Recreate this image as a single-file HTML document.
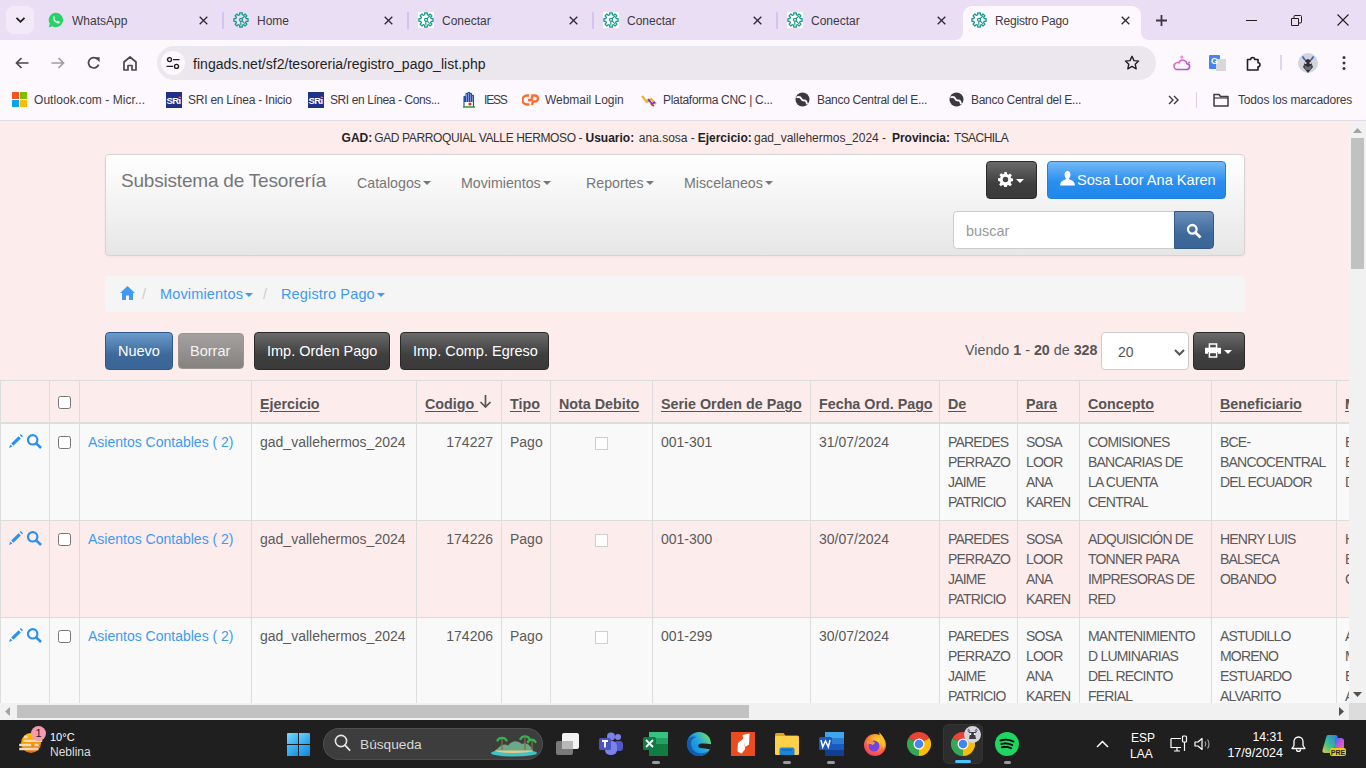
<!DOCTYPE html>
<html><head><meta charset="utf-8">
<style>
*{box-sizing:border-box;margin:0;padding:0}
html,body{width:1366px;height:768px;overflow:hidden;background:#fdecec;font-family:"Liberation Sans",sans-serif}
.abs{position:absolute}
.t{position:absolute;white-space:nowrap;line-height:1;font-size:14px}
#tabs{position:absolute;left:0;top:0;width:1366px;height:40px;background:#e9def4}
.tabt{top:15.2px;font-size:12px;color:#3c3b44}
#toolbar{position:absolute;left:0;top:40px;width:1366px;height:40px;background:#fdf7fe}
#omni{position:absolute;left:157px;top:46px;width:999px;height:34px;border-radius:17px;background:#ece6ef}
#bm{position:absolute;left:0;top:80px;width:1366px;height:41px;background:#fdf7fe;border-bottom:1px solid #e3dbe6}
.bmt{top:93.8px;font-size:12px;color:#3c3b44}
#page{position:absolute;left:0;top:0;width:1349px;height:703px;overflow:hidden}
#pagebg{position:absolute;left:0;top:121px;width:1349px;height:582px;background:#fdecec}
.t12{position:absolute;white-space:nowrap;line-height:1;font-size:12px}
#navbar{position:absolute;left:105px;top:154px;width:1140px;height:102px;border:1px solid #d4d4d4;border-radius:4px;background:linear-gradient(#fff,#e6e6e6);box-shadow:0 1px 3px rgba(0,0,0,.05)}
.nav{top:175.5px;font-size:14.2px;color:#777}
.caret{display:inline-block;width:0;height:0;border-left:4px solid transparent;border-right:4px solid transparent;border-top:4px solid #777;vertical-align:middle;margin-left:2px;margin-top:-1px}
.caret.w{border-top-color:#fff;margin:0}
.caret.b{border-top-color:#3f9af2}
.btn{position:absolute;border-radius:4px}
.dark{background:linear-gradient(#6a6a6a,#3f3f3f 60%,#3a3a3a);border:1px solid #2a2a2a}
#userbtn{background:linear-gradient(#74b9f6,#2a8ef0 55%,#1f88ea);border:1px solid #2080e0}
#search{position:absolute;background:#fff;border:1px solid #ccc;border-radius:4px 0 0 4px}
#searchbtn{background:linear-gradient(#6b8fbb,#3f6b9c 60%,#3a6596);border:1px solid #2f5a8a;border-radius:0 4px 4px 0}
#breadcrumb{position:absolute;left:105px;top:276px;width:1140px;height:36px;background:#f5f5f5;border-radius:4px}
.bc{top:287px;font-size:14.5px;color:#3f9af2;letter-spacing:0.15px}
.blue2{background:linear-gradient(#6a9bcb,#3d6a9b 60%,#3a6596);border:1px solid #2d5a8a}
.gray{background:linear-gradient(#a5a1a0,#85817f);border:1px solid #9a9695}
.btxt{top:11px;color:#fff;font-size:14.5px}
#select{position:absolute;background:#fff;border:1px solid #ccc;border-radius:4px}
.th{font-weight:bold;color:#555;font-size:14.3px;text-decoration:underline;text-underline-offset:1.5px}
.td{color:#5a5a5a;line-height:20px;top:0}
.up{letter-spacing:-0.8px}
.lnk{color:#3f9af2}
.cb{position:absolute;width:13px;height:13px;border:1px solid #767676;border-radius:2.5px;background:#fff}
.cbd{position:absolute;width:13px;height:13px;border:1px solid #cfcfcf;background:#fff}
#vscroll{position:absolute;left:1349px;top:121px;width:17px;height:582px;background:#f1f1f1}
#hscroll{position:absolute;left:0;top:703px;width:1349px;height:17px;background:#f1f1f1}
#corner{position:absolute;left:1349px;top:703px;width:17px;height:17px;background:#dcdcdc}
#taskbar{position:absolute;left:0;top:720px;width:1366px;height:48px;background:#1f1f1f}
.tb{position:absolute;white-space:nowrap;line-height:1;color:#fff;font-size:12px}

</style></head><body>
<div id="tabs">
 <div class="abs" style="left:6px;top:6px;width:28px;height:28px;border-radius:8px;background:#f2eaf8"></div>
 <svg class="abs" style="left:15px;top:16px" width="11" height="8" viewBox="0 0 11 8"><path d="M1.5 1.8l4 4 4-4" fill="none" stroke="#1f1f1f" stroke-width="1.8"/></svg>
 <!-- active tab -->
 <div class="abs" style="left:963px;top:6px;width:178px;height:40px;border-radius:9px 9px 0 0;background:#fdf7fe"></div>
 <div class="abs" style="left:955px;top:32px;width:8px;height:8px;background:#fdf7fe"></div>
 <div class="abs" style="left:947px;top:24px;width:16px;height:16px;border-radius:50%;background:#e9def4"></div>
 <div class="abs" style="left:1141px;top:32px;width:8px;height:8px;background:#fdf7fe"></div>
 <div class="abs" style="left:1141px;top:24px;width:16px;height:16px;border-radius:50%;background:#e9def4"></div>
 <svg class="abs" style="left:48px;top:12px" width="16" height="16" viewBox="0 0 16 16"><path d="M8 .8a7.2 7.2 0 0 0-6.2 10.9L.8 15.2l3.6-.9A7.2 7.2 0 1 0 8 .8z" fill="#25d366"/><path d="M5.3 4.2c.3-.3.6-.3.8 0l.8 1.6c.1.3 0 .5-.2.7l-.4.5c.5 1.1 1.4 2 2.6 2.6l.5-.5c.2-.2.5-.3.7-.1l1.5.8c.3.2.3.5 0 .9-.5.6-1.1 1-1.9.8-2.1-.6-4.1-2.6-4.7-4.7-.2-.8.2-1.5.3-1.6z" fill="#fff"/></svg>
<div class="t tabt" style="left:72px">WhatsApp</div>
<svg class="abs" style="left:198.5px;top:15.5px" width="9" height="9" viewBox="0 0 9 9"><path d="M.7.7l7.6 7.6M8.3.7L.7 8.3" stroke="#2f2d36" stroke-width="1.35"/></svg>
<svg class="abs" style="left:233px;top:12px" width="16" height="16" viewBox="0 0 16 16"><path d="M6.70 2.76 L6.70 0.92 L9.30 0.92 L9.30 2.76 L10.79 3.37 L12.09 2.07 L13.93 3.91 L12.63 5.21 L13.24 6.70 L15.08 6.70 L15.08 9.30 L13.24 9.30 L12.63 10.79 L13.93 12.09 L12.09 13.93 L10.79 12.63 L9.30 13.24 L9.30 15.08 L6.70 15.08 L6.70 13.24 L5.21 12.63 L3.91 13.93 L2.07 12.09 L3.37 10.79 L2.76 9.30 L0.92 9.30 L0.92 6.70 L2.76 6.70 L3.37 5.21 L2.07 3.91 L3.91 2.07 L5.21 3.37Z" fill="none" stroke="#16998a" stroke-width="1.3" stroke-linejoin="round"/><circle cx="8" cy="7.8" r="1.5" fill="none" stroke="#16998a" stroke-width="1.2"/><path d="M9.1 6.7l2.7-2.7M9.1 8.9l2.7 2.7M7.8 9.3v3.7" fill="none" stroke="#16998a" stroke-width="1.1"/></svg>
<div class="t tabt" style="left:257px">Home</div>
<svg class="abs" style="left:383.5px;top:15.5px" width="9" height="9" viewBox="0 0 9 9"><path d="M.7.7l7.6 7.6M8.3.7L.7 8.3" stroke="#2f2d36" stroke-width="1.35"/></svg>
<svg class="abs" style="left:418px;top:12px" width="16" height="16" viewBox="0 0 16 16"><rect x="0" y="0" width="16" height="16" fill="#fff"/><path d="M6.70 2.76 L6.70 0.92 L9.30 0.92 L9.30 2.76 L10.79 3.37 L12.09 2.07 L13.93 3.91 L12.63 5.21 L13.24 6.70 L15.08 6.70 L15.08 9.30 L13.24 9.30 L12.63 10.79 L13.93 12.09 L12.09 13.93 L10.79 12.63 L9.30 13.24 L9.30 15.08 L6.70 15.08 L6.70 13.24 L5.21 12.63 L3.91 13.93 L2.07 12.09 L3.37 10.79 L2.76 9.30 L0.92 9.30 L0.92 6.70 L2.76 6.70 L3.37 5.21 L2.07 3.91 L3.91 2.07 L5.21 3.37Z" fill="none" stroke="#16998a" stroke-width="1.3" stroke-linejoin="round"/><circle cx="8" cy="7.8" r="1.5" fill="none" stroke="#16998a" stroke-width="1.2"/><path d="M9.1 6.7l2.7-2.7M9.1 8.9l2.7 2.7M7.8 9.3v3.7" fill="none" stroke="#16998a" stroke-width="1.1"/></svg>
<div class="t tabt" style="left:442px">Conectar</div>
<svg class="abs" style="left:568.5px;top:15.5px" width="9" height="9" viewBox="0 0 9 9"><path d="M.7.7l7.6 7.6M8.3.7L.7 8.3" stroke="#2f2d36" stroke-width="1.35"/></svg>
<svg class="abs" style="left:603px;top:12px" width="16" height="16" viewBox="0 0 16 16"><rect x="0" y="0" width="16" height="16" fill="#fff"/><path d="M6.70 2.76 L6.70 0.92 L9.30 0.92 L9.30 2.76 L10.79 3.37 L12.09 2.07 L13.93 3.91 L12.63 5.21 L13.24 6.70 L15.08 6.70 L15.08 9.30 L13.24 9.30 L12.63 10.79 L13.93 12.09 L12.09 13.93 L10.79 12.63 L9.30 13.24 L9.30 15.08 L6.70 15.08 L6.70 13.24 L5.21 12.63 L3.91 13.93 L2.07 12.09 L3.37 10.79 L2.76 9.30 L0.92 9.30 L0.92 6.70 L2.76 6.70 L3.37 5.21 L2.07 3.91 L3.91 2.07 L5.21 3.37Z" fill="none" stroke="#16998a" stroke-width="1.3" stroke-linejoin="round"/><circle cx="8" cy="7.8" r="1.5" fill="none" stroke="#16998a" stroke-width="1.2"/><path d="M9.1 6.7l2.7-2.7M9.1 8.9l2.7 2.7M7.8 9.3v3.7" fill="none" stroke="#16998a" stroke-width="1.1"/></svg>
<div class="t tabt" style="left:627px">Conectar</div>
<svg class="abs" style="left:752.5px;top:15.5px" width="9" height="9" viewBox="0 0 9 9"><path d="M.7.7l7.6 7.6M8.3.7L.7 8.3" stroke="#2f2d36" stroke-width="1.35"/></svg>
<svg class="abs" style="left:787px;top:12px" width="16" height="16" viewBox="0 0 16 16"><rect x="0" y="0" width="16" height="16" fill="#fff"/><path d="M6.70 2.76 L6.70 0.92 L9.30 0.92 L9.30 2.76 L10.79 3.37 L12.09 2.07 L13.93 3.91 L12.63 5.21 L13.24 6.70 L15.08 6.70 L15.08 9.30 L13.24 9.30 L12.63 10.79 L13.93 12.09 L12.09 13.93 L10.79 12.63 L9.30 13.24 L9.30 15.08 L6.70 15.08 L6.70 13.24 L5.21 12.63 L3.91 13.93 L2.07 12.09 L3.37 10.79 L2.76 9.30 L0.92 9.30 L0.92 6.70 L2.76 6.70 L3.37 5.21 L2.07 3.91 L3.91 2.07 L5.21 3.37Z" fill="none" stroke="#16998a" stroke-width="1.3" stroke-linejoin="round"/><circle cx="8" cy="7.8" r="1.5" fill="none" stroke="#16998a" stroke-width="1.2"/><path d="M9.1 6.7l2.7-2.7M9.1 8.9l2.7 2.7M7.8 9.3v3.7" fill="none" stroke="#16998a" stroke-width="1.1"/></svg>
<div class="t tabt" style="left:811px">Conectar</div>
<svg class="abs" style="left:936.5px;top:15.5px" width="9" height="9" viewBox="0 0 9 9"><path d="M.7.7l7.6 7.6M8.3.7L.7 8.3" stroke="#2f2d36" stroke-width="1.35"/></svg>
<svg class="abs" style="left:971px;top:12px" width="16" height="16" viewBox="0 0 16 16"><path d="M6.70 2.76 L6.70 0.92 L9.30 0.92 L9.30 2.76 L10.79 3.37 L12.09 2.07 L13.93 3.91 L12.63 5.21 L13.24 6.70 L15.08 6.70 L15.08 9.30 L13.24 9.30 L12.63 10.79 L13.93 12.09 L12.09 13.93 L10.79 12.63 L9.30 13.24 L9.30 15.08 L6.70 15.08 L6.70 13.24 L5.21 12.63 L3.91 13.93 L2.07 12.09 L3.37 10.79 L2.76 9.30 L0.92 9.30 L0.92 6.70 L2.76 6.70 L3.37 5.21 L2.07 3.91 L3.91 2.07 L5.21 3.37Z" fill="none" stroke="#16998a" stroke-width="1.3" stroke-linejoin="round"/><circle cx="8" cy="7.8" r="1.5" fill="none" stroke="#16998a" stroke-width="1.2"/><path d="M9.1 6.7l2.7-2.7M9.1 8.9l2.7 2.7M7.8 9.3v3.7" fill="none" stroke="#16998a" stroke-width="1.1"/></svg>
<div class="t tabt" style="left:995px;letter-spacing:-0.2px">Registro Pago</div>
<svg class="abs" style="left:1120.5px;top:15.5px" width="9" height="9" viewBox="0 0 9 9"><path d="M.7.7l7.6 7.6M8.3.7L.7 8.3" stroke="#2f2d36" stroke-width="1.35"/></svg>
<div class="abs" style="left:222px;top:12px;width:2px;height:17px;background:#d4c3f2"></div>
<div class="abs" style="left:407px;top:12px;width:2px;height:17px;background:#d4c3f2"></div>
<div class="abs" style="left:592px;top:12px;width:2px;height:17px;background:#d4c3f2"></div>
<div class="abs" style="left:776px;top:12px;width:2px;height:17px;background:#d4c3f2"></div>
 <svg class="abs" style="left:1155.5px;top:15px" width="11" height="11" viewBox="0 0 11 11"><path d="M5.5 0v11M0 5.5h11" stroke="#3a3842" stroke-width="1.8"/></svg>
 <div class="abs" style="left:1246px;top:20px;width:11px;height:1px;background:#1f1f1f"></div>
 <svg class="abs" style="left:1291px;top:15px" width="11" height="11" viewBox="0 0 11 11"><path d="M.5 3.5h7v7h-7z M3 3.5V1.5a1 1 0 0 1 1-1h5.5a1 1 0 0 1 1 1V7a1 1 0 0 1-1 1H7.5" fill="none" stroke="#1f1f1f" stroke-width="1"/></svg>
 <svg class="abs" style="left:1337px;top:14px" width="12" height="12" viewBox="0 0 12 12"><path d="M.5.5l11 11M11.5.5l-11 11" stroke="#1f1f1f" stroke-width="1.1"/></svg>
</div>
<div id="toolbar">
 <svg class="abs" style="left:15px;top:17px" width="14" height="12" viewBox="0 0 14 12"><path d="M13.5 6H1.5M6.5 1L1.5 6l5 5" fill="none" stroke="#47464f" stroke-width="1.7"/></svg>
 <svg class="abs" style="left:51px;top:17px" width="14" height="12" viewBox="0 0 14 12"><path d="M.5 6h12M7.5 1l5 5-5 5" fill="none" stroke="#a29ca6" stroke-width="1.7"/></svg>
 <svg class="abs" style="left:87px;top:16px" width="14" height="14" viewBox="0 0 14 14"><path d="M11.6 8.6A5.2 5.2 0 1 1 10.3 3" fill="none" stroke="#47464f" stroke-width="1.7"/><path d="M7.6 1.2h5v5z" fill="#47464f"/></svg>
 <svg class="abs" style="left:123px;top:16px" width="14" height="15" viewBox="0 0 14 15"><path d="M1 14V6l6-5 6 5v8H9V9.5H5V14z" fill="none" stroke="#47464f" stroke-width="1.7" stroke-linejoin="round"/></svg>
</div>
<div id="omni">
 <div class="abs" style="left:4px;top:5px;width:24px;height:24px;border-radius:50%;background:#fdf7fe"></div>
 <svg class="abs" style="left:9px;top:10px" width="14" height="14" viewBox="0 0 14 14"><circle cx="3.5" cy="3.6" r="2" fill="none" stroke="#1f1f1f" stroke-width="1.4"/><path d="M7 3.6h6.5M0.5 10.4H7" stroke="#1f1f1f" stroke-width="1.4"/><circle cx="10.5" cy="10.4" r="2" fill="none" stroke="#1f1f1f" stroke-width="1.4"/></svg>
 <div class="t" style="left:36px;top:11px;font-size:14px;color:#1f1f1f;letter-spacing:0.03px">fingads.net/sf2/tesoreria/registro_pago_list.php</div>
 <svg class="abs" style="left:967px;top:9px" width="16" height="16" viewBox="0 0 16 16"><path d="M8 1.3l2 4.3 4.6.5-3.4 3.1 1 4.6L8 11.4l-4.2 2.4 1-4.6L1.4 6.1 6 5.6z" fill="none" stroke="#1f1f1f" stroke-width="1.4" stroke-linejoin="round"/></svg>
</div>
<svg class="abs" style="left:1172px;top:55px" width="19" height="16" viewBox="0 0 19 16"><defs><linearGradient id="wx" x1="0" y1="0" x2="1" y2="1"><stop offset="0" stop-color="#f06ac8"/><stop offset="1" stop-color="#a050e0"/></linearGradient></defs><path d="M4.5 14.5h10a2.9 2.9 0 0 0 .4-5.8 4.2 4.2 0 0 0-8-1A3.4 3.4 0 0 0 4.5 14.5z" fill="none" stroke="url(#wx)" stroke-width="1.6"/><circle cx="9.8" cy="2.2" r="1.1" fill="none" stroke="#e070c0" stroke-width="1"/><circle cx="2.3" cy="9.5" r="1" fill="#e070c0"/><circle cx="17" cy="7.6" r="1" fill="#c060d0"/></svg>
<div class="abs" style="left:1209px;top:55px;width:11px;height:14px;background:#4285f4;border-radius:1px"></div>
<div class="abs" style="left:1216px;top:59px;width:10px;height:12px;background:#d8d8d8"></div>
<div class="abs" style="left:1211px;top:56px;font:bold 9px 'Liberation Sans';color:#fff">G</div>
<svg class="abs" style="left:1246px;top:55px" width="17" height="16" viewBox="0 0 17 16"><path d="M1.5 4.5h3.2a2 2 0 1 1 4 0h3.3v3.3a2 2 0 1 1 0 4v3.2H1.5z" fill="none" stroke="#1f1f1f" stroke-width="1.6" stroke-linejoin="round"/></svg>
<div class="abs" style="left:1280px;top:55px;width:2px;height:15px;background:#e0d4f4"></div>
<svg class="abs" style="left:1298px;top:53px" width="20" height="20" viewBox="0 0 20 20"><circle cx="10" cy="10" r="10" fill="#d4d4dc"/><path d="M3.5 3.5l4 4.5L5 14l5 6 5-6-2.5-6 4-4.5-4.5 3.5L10 6 7.5 7z" fill="#2e2e36"/><path d="M6 12l4 2 4-2-1.5 5h-5z" fill="#6a6a72"/><circle cx="7.6" cy="10" r="1" fill="#ddd"/><circle cx="12.4" cy="10" r="1" fill="#ddd"/><path d="M4.5 3.5l2.5 3.5M15.5 3.5L13 7" stroke="#2a6ac0" stroke-width="1.6"/></svg>
<svg class="abs" style="left:1342px;top:55px" width="4" height="16" viewBox="0 0 4 16"><circle cx="2" cy="2.5" r="1.5" fill="#3a3842"/><circle cx="2" cy="8" r="1.5" fill="#3a3842"/><circle cx="2" cy="13.5" r="1.5" fill="#3a3842"/></svg>
<div id="bm"></div>
<div class="abs" style="left:12px;top:92px;width:7px;height:7px;background:#f35325"></div><div class="abs" style="left:20px;top:92px;width:7px;height:7px;background:#81bc06"></div><div class="abs" style="left:12px;top:100px;width:7px;height:7px;background:#05a6f0"></div><div class="abs" style="left:20px;top:100px;width:7px;height:7px;background:#ffba08"></div>
<div class="t bmt" style="left:34px;letter-spacing:0.05px">Outlook.com - Micr...</div>
<svg class="abs" style="left:166px;top:92px" width="16" height="16" viewBox="0 0 16 16"><rect width="16" height="16" fill="#1f3288"/><text x="0.6" y="12" font-family="Liberation Sans" font-weight="bold" font-size="9.5" letter-spacing="-0.6" fill="#fff">SRi</text><rect x="12.6" y="4" width="1.6" height="1.6" fill="#e02030"/></svg>
<div class="t bmt" style="left:188px;letter-spacing:-0.24px">SRI en Línea - Inicio</div>
<svg class="abs" style="left:308px;top:92px" width="16" height="16" viewBox="0 0 16 16"><rect width="16" height="16" fill="#1f3288"/><text x="0.6" y="12" font-family="Liberation Sans" font-weight="bold" font-size="9.5" letter-spacing="-0.6" fill="#fff">SRi</text><rect x="12.6" y="4" width="1.6" height="1.6" fill="#e02030"/></svg>
<div class="t bmt" style="left:330px;letter-spacing:-0.41px">SRI en Línea - Cons...</div>
<svg class="abs" style="left:462px;top:92px" width="14" height="16" viewBox="0 0 14 16"><path d="M2 15V5c0-1 1-1 1 0v5M4 10V2c0-1 1.5-1 1.5 0v8M6 10V1c0-1 1.5-1 1.5 0v9M8 10V2c0-1 1.5-1 1.5 0v8M10 10V4c0-1 1.5-1 1.5 0v11" fill="none" stroke="#1e4fa8" stroke-width="1.1"/><path d="M1 15h12" stroke="#2a9a3a" stroke-width="1.5"/><circle cx="8" cy="12" r="1.6" fill="#e0302a"/></svg>
<div class="t bmt" style="left:484px;letter-spacing:-1.2px">IESS</div>
<svg class="abs" style="left:522px;top:94px" width="17" height="12" viewBox="0 0 17 12"><path d="M7 1.5H5a4.5 4.5 0 0 0 0 9h2.5M6 6h3.5l1-4.5h2.5a3 3 0 0 1 0 6h-2L10 11" fill="none" stroke="#ff6c2c" stroke-width="2.4"/></svg>
<div class="t bmt" style="left:545px;letter-spacing:-0.03px">Webmail Login</div>
<svg class="abs" style="left:641px;top:93px" width="16" height="14" viewBox="0 0 16 14"><path d="M1 3l5 6 4-3 5 5" fill="none" stroke="#e8b42a" stroke-width="2.2"/><path d="M7 6l4 5 3-2" fill="none" stroke="#7a3fb5" stroke-width="2"/><path d="M10 11l3 2" stroke="#d9352a" stroke-width="2"/></svg>
<div class="t bmt" style="left:663px;letter-spacing:-0.30px">Plataforma CNC | C...</div>
<svg class="abs" style="left:795px;top:92px" width="15" height="15" viewBox="0 0 15 15"><circle cx="7.5" cy="7.5" r="7" fill="#3a3940"/><path d="M2.2 5.2C4 4.6 5.6 5.2 6.2 6.6 6.8 8 7.4 8.6 9 8.4 10.6 8.2 11.6 9.4 11.9 11.6" fill="none" stroke="#fdf7fe" stroke-width="1.9" stroke-linecap="round"/></svg>
<div class="t bmt" style="left:817px;letter-spacing:-0.30px">Banco Central del E...</div>
<svg class="abs" style="left:949px;top:92px" width="15" height="15" viewBox="0 0 15 15"><circle cx="7.5" cy="7.5" r="7" fill="#3a3940"/><path d="M2.2 5.2C4 4.6 5.6 5.2 6.2 6.6 6.8 8 7.4 8.6 9 8.4 10.6 8.2 11.6 9.4 11.9 11.6" fill="none" stroke="#fdf7fe" stroke-width="1.9" stroke-linecap="round"/></svg>
<div class="t bmt" style="left:971px;letter-spacing:-0.30px">Banco Central del E...</div>
<svg class="abs" style="left:1168px;top:95px" width="11" height="10" viewBox="0 0 11 10"><path d="M1 1l4 4-4 4M6 1l4 4-4 4" fill="none" stroke="#3c3b44" stroke-width="1.4"/></svg>
<div class="abs" style="left:1196px;top:92px;width:1px;height:16px;background:#ddcdf5"></div>
<svg class="abs" style="left:1213px;top:93px" width="16" height="14" viewBox="0 0 16 14"><path d="M1 1.5h5l1.5 2H15v9.5H1z" fill="none" stroke="#3c3b44" stroke-width="1.5" stroke-linejoin="round"/><path d="M1 5h14" stroke="#3c3b44" stroke-width="1.2"/></svg>
<div class="t bmt" style="left:1238px;letter-spacing:-0.16px">Todos los marcadores</div>

<div id="page">
<div class="t12" style="left:341.6px;top:132px;color:#333;"><b style="color:#222">GAD:</b></div><div class="t12" style="left:374.2px;top:132px;color:#333;letter-spacing:-0.37px">GAD PARROQUIAL VALLE HERMOSO -</div><div class="t12" style="left:585.5px;top:132px;color:#333;"><b style="color:#222">Usuario:</b></div><div class="t12" style="left:638.8px;top:132px;color:#333;">ana.sosa -</div><div class="t12" style="left:697.7px;top:132px;color:#333;"><b style="color:#222">Ejercicio:</b></div><div class="t12" style="left:754px;top:132px;color:#333;">gad_vallehermos_2024 -</div><div class="t12" style="left:891.9px;top:132px;color:#333;"><b style="color:#222">Provincia:</b></div><div class="t12" style="left:953.9px;top:132px;color:#333;letter-spacing:-0.55px">TSACHILA</div>
<div id="navbar"></div>
<div class="t" style="left:121px;top:171px;font-size:19px;letter-spacing:-0.2px;color:#777">Subsistema de Tesorería</div>
<div class="t nav" style="left:357px">Catalogos<i class="caret"></i></div>
<div class="t nav" style="left:461px">Movimientos<i class="caret"></i></div>
<div class="t nav" style="left:586px">Reportes<i class="caret"></i></div>
<div class="t nav" style="left:684px">Miscelaneos<i class="caret"></i></div>
<div id="gearbtn" class="btn dark" style="left:986px;top:161px;width:51px;height:38px">
 <svg width="15" height="15" viewBox="0 0 16 16" style="position:absolute;left:11px;top:9.5px"><path fill="#fff" fill-rule="evenodd" d="M6.7 0h2.6l.4 2.2 1.4.6 1.8-1.3 1.9 1.9-1.3 1.8.6 1.4 2.2.4v2.6l-2.2.4-.6 1.4 1.3 1.8-1.9 1.9-1.8-1.3-1.4.6-.4 2.2H6.7l-.4-2.2-1.4-.6-1.8 1.3-1.9-1.9 1.3-1.8-.6-1.4L0 9.3V6.7l2.2-.4.6-1.4-1.3-1.8 1.9-1.9 1.8 1.3 1.4-.6zM8 5.1a2.9 2.9 0 1 0 0 5.8 2.9 2.9 0 1 0 0-5.8z"/></svg>
 <i class="caret w" style="position:absolute;left:29px;top:17px"></i>
</div>
<div id="userbtn" class="btn" style="left:1047px;top:161px;width:179px;height:38px">
 <svg width="15" height="15" viewBox="0 0 15 15" style="position:absolute;left:12px;top:9px"><path fill="#fff" d="M7.5 0C5.6 0 4.6 1.6 4.6 3.5c0 1.7.7 3.4 1.6 4.1-.2.8-.9 1-2 1.4C2.4 9.6 1 10.4.5 12.3L0 14.6h15l-.5-2.3c-.5-1.9-1.9-2.7-3.7-3.3-1.1-.4-1.8-.6-2-1.4.9-.7 1.6-2.4 1.6-4.1C10.4 1.6 9.4 0 7.5 0z"/></svg>
 <div class="t" style="left:29px;top:10.5px;color:#fff;font-size:14.6px">Sosa Loor Ana Karen</div>
</div>
<div id="search" style="left:953px;top:211px;width:222px;height:38px"><div class="t" style="left:12px;top:12px;color:#999;font-size:14.4px">buscar</div></div>
<div id="searchbtn" class="btn" style="left:1174px;top:211px;width:40px;height:38px">
 <svg width="16" height="16" viewBox="0 0 16 16" style="position:absolute;left:11px;top:11px"><circle cx="6.3" cy="6.3" r="4.3" fill="none" stroke="#fff" stroke-width="2.3"/><path d="M9.6 9.8l3.9 3.7" stroke="#fff" stroke-width="2.8" stroke-linecap="square"/></svg>
</div>
<div id="breadcrumb"></div>
<svg width="15" height="14" viewBox="0 0 15 14" style="position:absolute;left:120px;top:286px"><path fill="#3f9af2" d="M7.5 0L0 7h2v7h4V9.5h3V14h4V7h2z"/></svg>
<div class="t bc" style="left:142px;color:#ccc">/</div>
<div class="t bc" style="left:160px">Movimientos<i class="caret b"></i></div>
<div class="t bc" style="left:263px;color:#ccc">/</div>
<div class="t bc" style="left:281px">Registro Pago<i class="caret b"></i></div>

<div class="btn blue2" style="left:105px;top:332px;width:68px;height:38px"><div class="t btxt" style="left:12px">Nuevo</div></div>
<div class="btn gray" style="left:178px;top:333px;width:66px;height:36px"><div class="t btxt" style="left:11px;top:10px;color:#f4f4f4">Borrar</div></div>
<div class="btn dark" style="left:254px;top:332px;width:136px;height:38px"><div class="t btxt" style="left:12px">Imp. Orden Pago</div></div>
<div class="btn dark" style="left:400px;top:332px;width:149px;height:38px"><div class="t btxt" style="left:12px">Imp. Comp. Egreso</div></div>

<div class="t" style="left:965px;top:343px;color:#555;font-size:14.3px">Viendo <b>1</b> - <b>20</b> de <b>328</b></div>
<div id="select" style="left:1101px;top:332px;width:88px;height:38px"><div class="t" style="left:16px;top:12px;color:#555">20</div>
<svg width="11" height="7" viewBox="0 0 11 7" style="position:absolute;left:72px;top:15.5px"><path d="M1 1l4.5 4.5L10 1" fill="none" stroke="#555" stroke-width="2"/></svg></div>
<div class="btn dark" style="left:1193px;top:332px;width:52px;height:38px">
 <svg width="16" height="15" viewBox="0 0 17 16" preserveAspectRatio="none" style="position:absolute;left:10.5px;top:9.5px"><path d="M4.7 1h7.6v4.5H4.7z" fill="none" stroke="#fff" stroke-width="1.6"/><path d="M0 5h17v6.5h-3.3V9.5H3.3v2H0z" fill="#fff"/><path d="M4.7 10h7.6v4.8H4.7z" fill="none" stroke="#fff" stroke-width="1.6"/><path d="M5.5 12.5h6" stroke="#444" stroke-width="1"/></svg>
 <i class="caret w" style="position:absolute;left:30px;top:17px"></i>
</div>
<div class="abs" style="left:0;top:381px;width:1349px;height:41px;background:#fdecec"></div>
<div class="abs" style="left:0;top:424px;width:1349px;height:96px;background:#f9f9f9"></div>
<div class="abs" style="left:0;top:521px;width:1349px;height:96px;background:#fdecec"></div>
<div class="abs" style="left:0;top:618px;width:1349px;height:96px;background:#f9f9f9"></div>
<div class="abs" style="left:0;top:380px;width:1349px;height:1px;background:#ddd"></div>
<div class="abs" style="left:0;top:422px;width:1349px;height:2px;background:#ddd"></div>
<div class="abs" style="left:0;top:520px;width:1349px;height:1px;background:#ddd"></div>
<div class="abs" style="left:0;top:617px;width:1349px;height:1px;background:#ddd"></div>
<div class="abs" style="left:0px;top:380px;width:1px;height:330px;background:#ddd"></div>
<div class="abs" style="left:49px;top:380px;width:1px;height:330px;background:#ddd"></div>
<div class="abs" style="left:79px;top:380px;width:1px;height:330px;background:#ddd"></div>
<div class="abs" style="left:251px;top:380px;width:1px;height:330px;background:#ddd"></div>
<div class="abs" style="left:416px;top:380px;width:1px;height:330px;background:#ddd"></div>
<div class="abs" style="left:501px;top:380px;width:1px;height:330px;background:#ddd"></div>
<div class="abs" style="left:550px;top:380px;width:1px;height:330px;background:#ddd"></div>
<div class="abs" style="left:652px;top:380px;width:1px;height:330px;background:#ddd"></div>
<div class="abs" style="left:810px;top:380px;width:1px;height:330px;background:#ddd"></div>
<div class="abs" style="left:939px;top:380px;width:1px;height:330px;background:#ddd"></div>
<div class="abs" style="left:1017px;top:380px;width:1px;height:330px;background:#ddd"></div>
<div class="abs" style="left:1079px;top:380px;width:1px;height:330px;background:#ddd"></div>
<div class="abs" style="left:1211px;top:380px;width:1px;height:330px;background:#ddd"></div>
<div class="abs" style="left:1336px;top:380px;width:1px;height:330px;background:#ddd"></div>
<div class="t th" style="left:260px;top:397px">Ejercicio</div>
<div class="t th" style="left:425px;top:397px">Codigo&nbsp;</div>
<div class="t th" style="left:510px;top:397px">Tipo</div>
<div class="t th" style="left:559px;top:397px">Nota Debito</div>
<div class="t th" style="left:661px;top:397px">Serie Orden de Pago</div>
<div class="t th" style="left:819px;top:397px">Fecha Ord. Pago</div>
<div class="t th" style="left:948px;top:397px">De</div>
<div class="t th" style="left:1026px;top:397px">Para</div>
<div class="t th" style="left:1088px;top:397px">Concepto</div>
<div class="t th" style="left:1220px;top:397px">Beneficiario</div>
<div class="t th" style="left:1345px;top:397px">M</div>
<svg width="13" height="15" viewBox="0 0 13 15" style="position:absolute;left:479px;top:394px"><path d="M6.5 1v12M1.5 8l5 5 5-5" fill="none" stroke="#555" stroke-width="1.7"/></svg>
<div class="cb" style="left:58px;top:396px"></div>
<svg width="16" height="15" viewBox="0 0 16 15" style="position:absolute;left:8px;top:434px"><path fill="#2d8ff0" d="M3.2 9.6L10.6 2.2 12.8 4.4 5.4 11.8zM2.4 10.6L4.4 12.6 1 14zM11.7 1.1L12.7 .1 15 2.3 14 3.3z"/></svg>
<svg width="15" height="15" viewBox="0 0 15 15" style="position:absolute;left:27px;top:434px"><circle cx="5.7" cy="5.8" r="4.7" fill="none" stroke="#2d8ff0" stroke-width="2.2"/><path d="M9.3 9.5l3.8 3.6" stroke="#2d8ff0" stroke-width="2.6" stroke-linecap="square"/></svg>
<div class="cb" style="left:58px;top:436px"></div>
<div class="t td lnk" style="left:88px;top:432px">Asientos Contables ( 2)</div>
<div class="t td" style="left:260px;top:432px">gad_vallehermos_2024</div>
<div class="t td" style="left:446px;top:432px;width:47px;text-align:right">174227</div>
<div class="t td" style="left:510px;top:432px">Pago</div>
<div class="cbd" style="left:595px;top:437px"></div>
<div class="t td" style="left:661px;top:432px">001-301</div>
<div class="t td" style="left:819px;top:432px">31/07/2024</div>
<div class="t td up" style="left:948px;top:432px">PAREDES<br>PERRAZO<br>JAIME<br>PATRICIO</div>
<div class="t td up" style="left:1026px;top:432px">SOSA<br>LOOR<br>ANA<br>KAREN</div>
<div class="t td up" style="left:1088px;top:432px">COMISIONES<br>BANCARIAS DE<br>LA CUENTA<br>CENTRAL</div>
<div class="t td up" style="left:1220px;top:432px">BCE-<br>BANCOCENTRAL<br>DEL ECUADOR</div>
<div class="t td up" style="left:1345px;top:432px">E<br>B<br>D</div>
<svg width="16" height="15" viewBox="0 0 16 15" style="position:absolute;left:8px;top:531px"><path fill="#2d8ff0" d="M3.2 9.6L10.6 2.2 12.8 4.4 5.4 11.8zM2.4 10.6L4.4 12.6 1 14zM11.7 1.1L12.7 .1 15 2.3 14 3.3z"/></svg>
<svg width="15" height="15" viewBox="0 0 15 15" style="position:absolute;left:27px;top:531px"><circle cx="5.7" cy="5.8" r="4.7" fill="none" stroke="#2d8ff0" stroke-width="2.2"/><path d="M9.3 9.5l3.8 3.6" stroke="#2d8ff0" stroke-width="2.6" stroke-linecap="square"/></svg>
<div class="cb" style="left:58px;top:533px"></div>
<div class="t td lnk" style="left:88px;top:529px">Asientos Contables ( 2)</div>
<div class="t td" style="left:260px;top:529px">gad_vallehermos_2024</div>
<div class="t td" style="left:446px;top:529px;width:47px;text-align:right">174226</div>
<div class="t td" style="left:510px;top:529px">Pago</div>
<div class="cbd" style="left:595px;top:534px"></div>
<div class="t td" style="left:661px;top:529px">001-300</div>
<div class="t td" style="left:819px;top:529px">30/07/2024</div>
<div class="t td up" style="left:948px;top:529px">PAREDES<br>PERRAZO<br>JAIME<br>PATRICIO</div>
<div class="t td up" style="left:1026px;top:529px">SOSA<br>LOOR<br>ANA<br>KAREN</div>
<div class="t td up" style="left:1088px;top:529px">ADQUISICIÓN DE<br>TONNER PARA<br>IMPRESORAS DE<br>RED</div>
<div class="t td up" style="left:1220px;top:529px">HENRY LUIS<br>BALSECA<br>OBANDO</div>
<div class="t td up" style="left:1345px;top:529px">H<br>B<br>C</div>
<svg width="16" height="15" viewBox="0 0 16 15" style="position:absolute;left:8px;top:628px"><path fill="#2d8ff0" d="M3.2 9.6L10.6 2.2 12.8 4.4 5.4 11.8zM2.4 10.6L4.4 12.6 1 14zM11.7 1.1L12.7 .1 15 2.3 14 3.3z"/></svg>
<svg width="15" height="15" viewBox="0 0 15 15" style="position:absolute;left:27px;top:628px"><circle cx="5.7" cy="5.8" r="4.7" fill="none" stroke="#2d8ff0" stroke-width="2.2"/><path d="M9.3 9.5l3.8 3.6" stroke="#2d8ff0" stroke-width="2.6" stroke-linecap="square"/></svg>
<div class="cb" style="left:58px;top:630px"></div>
<div class="t td lnk" style="left:88px;top:626px">Asientos Contables ( 2)</div>
<div class="t td" style="left:260px;top:626px">gad_vallehermos_2024</div>
<div class="t td" style="left:446px;top:626px;width:47px;text-align:right">174206</div>
<div class="t td" style="left:510px;top:626px">Pago</div>
<div class="cbd" style="left:595px;top:631px"></div>
<div class="t td" style="left:661px;top:626px">001-299</div>
<div class="t td" style="left:819px;top:626px">30/07/2024</div>
<div class="t td up" style="left:948px;top:626px">PAREDES<br>PERRAZO<br>JAIME<br>PATRICIO</div>
<div class="t td up" style="left:1026px;top:626px">SOSA<br>LOOR<br>ANA<br>KAREN</div>
<div class="t td up" style="left:1088px;top:626px">MANTENIMIENTO<br>D LUMINARIAS<br>DEL RECINTO<br>FERIAL</div>
<div class="t td up" style="left:1220px;top:626px">ASTUDILLO<br>MORENO<br>ESTUARDO<br>ALVARITO</div>
<div class="t td up" style="left:1345px;top:626px">A<br>M<br>E<br>A</div>
</div>
<div id="vscroll"><svg class="abs" style="left:4px;top:6.5px" width="9" height="5" viewBox="0 0 9 5"><path d="M0 5L4.5 0 9 5z" fill="#a3a3a3"/></svg><div class="abs" style="left:2px;top:17px;width:13px;height:131px;background:#c1c1c1"></div><svg class="abs" style="left:4px;top:571px" width="9" height="5" viewBox="0 0 9 5"><path d="M0 0L4.5 5 9 0z" fill="#505050"/></svg></div>
<div id="hscroll"><svg class="abs" style="left:5px;top:4px" width="5" height="9" viewBox="0 0 5 9"><path d="M5 0L0 4.5 5 9z" fill="#a3a3a3"/></svg><div class="abs" style="left:17px;top:2px;width:732px;height:13px;background:#c1c1c1"></div><svg class="abs" style="left:1339px;top:4px" width="5" height="9" viewBox="0 0 5 9"><path d="M0 0L5 4.5 0 9z" fill="#505050"/></svg></div>
<div id="corner"></div>
<div id="taskbar">
 <!-- weather -->
 <svg class="abs" style="left:18px;top:12px" width="26" height="22" viewBox="0 0 26 22"><defs><linearGradient id="sun" x1="0" y1="0" x2="0" y2="1"><stop offset="0" stop-color="#ffc400"/><stop offset="1" stop-color="#ee6a10"/></linearGradient></defs><circle cx="13" cy="11" r="10" fill="url(#sun)"/><path d="M6 5h3.6M5.5 8.9h18.7M1.2 13h12M16.5 13h4M1.2 17h19.3" stroke="#ecdcb8" stroke-width="2.4"/></svg>
 <div class="abs" style="left:31px;top:6px;width:15px;height:15px;border-radius:50%;background:#f39bb0"></div>
 <div class="tb" style="left:35.5px;top:8px;font-size:11px;color:#222">1</div>
 <div class="tb" style="left:50px;top:11.5px;font-size:11px">10°C</div>
 <div class="tb" style="left:50px;top:26px;font-size:12px;color:#ddd">Neblina</div>
 <!-- windows -->
 <div class="abs" style="left:287px;top:13px;width:11px;height:11px;background:linear-gradient(135deg,#7fd8ff,#29a9ef);border-radius:1px 0 0 0"></div>
 <div class="abs" style="left:299px;top:13px;width:11px;height:11px;background:linear-gradient(135deg,#6fd0ff,#1f9ceb);border-radius:0 1px 0 0"></div>
 <div class="abs" style="left:287px;top:25px;width:11px;height:11px;background:linear-gradient(135deg,#4cc0fa,#1a90e0)"></div>
 <div class="abs" style="left:299px;top:25px;width:11px;height:11px;background:linear-gradient(135deg,#3cb4f5,#1585d8)"></div>
 <!-- search -->
 <div class="abs" style="left:323px;top:8px;width:220px;height:32px;border-radius:16px;background:#3d3d3d;border:1px solid #505050;border-bottom-color:#4a4a4a"></div>
 <svg class="abs" style="left:334px;top:14px" width="17" height="18" viewBox="0 0 17 18"><circle cx="7" cy="7" r="5.6" fill="none" stroke="#e6e6e6" stroke-width="1.6"/><path d="M11 11.2l4.6 5" stroke="#e6e6e6" stroke-width="1.8" stroke-linecap="round"/></svg>
 <div class="tb" style="left:360px;top:17.5px;font-size:13.7px;color:#d8d8d8">Búsqueda</div>
 <svg class="abs" style="left:489px;top:12px" width="50" height="25" viewBox="0 0 50 25"><ellipse cx="25" cy="21" rx="23" ry="3.6" fill="#3cc4c8"/><ellipse cx="25" cy="18.6" rx="19" ry="2.4" fill="#e8c888"/><path d="M7 18.5Q13 10 19 13.5Q26 6 33 12Q39 9 44 18.5z" fill="#6aa888"/><path d="M13 18V7M36 18V6M43 18V9" stroke="#8a6a3a" stroke-width="1.3"/><path d="M8.5 8.5C10 5 16 5 17.5 8.5M31.5 7C33 3.5 39 3.5 40.5 7M39 10C40 7 45 7 46.5 10" fill="none" stroke="#36b050" stroke-width="2.4" stroke-linecap="round"/></svg>
 <!-- task view -->
 <div class="abs" style="left:556px;top:21px;width:17px;height:14px;background:#7a7a7a;border-radius:2px"></div>
 <div class="abs" style="left:562px;top:13px;width:17px;height:16px;background:#f2f2f2;border-radius:2px"></div>
 <div class="abs" style="left:562px;top:21px;width:11px;height:8px;background:#b8b8b8"></div>
 <!-- teams -->
 <svg class="abs" style="left:599px;top:12px" width="24" height="23" viewBox="0 0 24 23"><circle cx="19" cy="5" r="3" fill="#7b83eb"/><rect x="15" y="9" width="9" height="10" rx="3.5" fill="#5059c9"/><circle cx="12" cy="4.5" r="4" fill="#7b83eb"/><rect x="6" y="9" width="12" height="14" rx="5" fill="#7b83eb"/><rect x="0" y="6" width="12" height="12" rx="1.5" fill="#4b53bc"/><path d="M3 9h6M6 9v6.5" stroke="#fff" stroke-width="1.8"/></svg>
 <!-- excel -->
 <svg class="abs" style="left:643px;top:12px" width="25" height="24" viewBox="0 0 25 24"><rect x="6" y="0" width="19" height="24" rx="2" fill="#21a366"/><rect x="6" y="12" width="19" height="12" fill="#107c41"/><rect x="6" y="0" width="19" height="6" fill="#33c481"/><rect x="0" y="5" width="13" height="13" rx="1.5" fill="#107c41"/><path d="M3 8l7 7M10 8l-7 7" stroke="#fff" stroke-width="1.8"/></svg>
 <div class="abs" style="left:652px;top:41px;width:8px;height:3px;border-radius:2px;background:#9a9a9a"></div>
 <!-- edge -->
 <svg class="abs" style="left:687px;top:12px" width="24" height="24" viewBox="0 0 24 24"><defs><linearGradient id="eg" x1="0" y1=".8" x2="1" y2=".2"><stop offset="0" stop-color="#1677d0"/><stop offset=".5" stop-color="#22a2e6"/><stop offset="1" stop-color="#72df62"/></linearGradient></defs><circle cx="12" cy="12" r="12" fill="url(#eg)"/><path d="M0.3 10C1.5 5 6 3.5 9.5 5 5 6 3.5 9.5 4 13c.8 5 5 8.5 10 8.5 2.5 0 5-1 7-2.5-2 3-5.5 5-9 5C5 24 0 18.5 0 12z" fill="#0e52a6" opacity=".8"/><path d="M24 12.2C20 11.5 15 11.3 12.5 12A2 2 0 0 0 12.7 15.8C16 16.3 20 16.8 23.5 17.3 23.9 15.8 24 14 24 12.2z" fill="#202020"/></svg>
 <!-- acrobat -->
 <div class="abs" style="left:731px;top:12px;width:24px;height:24px;background:#e94d1f"></div>
 <svg class="abs" style="left:731px;top:12px" width="24" height="24" viewBox="0 0 24 24"><path d="M11.5 3L18.5 1.5 18 12.5 14 15z" fill="#fff"/><path d="M7 11L12.5 6.5 14.2 17 10.5 21.8 6.5 19.5z" fill="#fff"/></svg>
 <!-- files -->
 <svg class="abs" style="left:775px;top:13px" width="24" height="22" viewBox="0 0 24 22"><path d="M0 1.5A1.5 1.5 0 0 1 1.5 0h7l2 2.5h12A1.5 1.5 0 0 1 24 4v2H0z" fill="#e3a21a"/><rect x="0" y="3" width="24" height="19" rx="1.5" fill="#ffd04a"/><path d="M4.5 22V16.5A2 2 0 0 1 6.5 14.5h11a2 2 0 0 1 2 2V22z" fill="#1b86d6"/><path d="M7 17h10" stroke="#0f5fa8" stroke-width="1"/></svg>
 <div class="abs" style="left:783px;top:41px;width:8px;height:3px;border-radius:2px;background:#9a9a9a"></div>
 <!-- word -->
 <svg class="abs" style="left:819px;top:12px" width="25" height="24" viewBox="0 0 25 24"><rect x="6" y="0" width="19" height="24" rx="2" fill="#2b7cd3"/><rect x="6" y="0" width="19" height="6" fill="#41a5ee"/><rect x="6" y="12" width="19" height="6" fill="#185abd"/><rect x="6" y="18" width="19" height="6" fill="#103f91"/><rect x="0" y="5" width="13" height="13" rx="1.5" fill="#185abd"/><path d="M2 8l1.7 7 2.8-6 2.8 6L11 8" fill="none" stroke="#fff" stroke-width="1.5"/></svg>
 <div class="abs" style="left:827px;top:41px;width:8px;height:3px;border-radius:2px;background:#9a9a9a"></div>
 <!-- firefox -->
 <svg class="abs" style="left:863px;top:12px" width="24" height="24" viewBox="0 0 24 24"><defs><radialGradient id="ff" cx=".6" cy=".3" r=".9"><stop offset="0" stop-color="#ffe226"/><stop offset=".5" stop-color="#ff7139"/><stop offset="1" stop-color="#e31587"/></radialGradient></defs><circle cx="12" cy="13" r="11" fill="url(#ff)"/><path d="M16 0c3 3 6 7 6 12 0 2-1 4-2 5" fill="#ffbd2e"/><circle cx="11" cy="14" r="5.5" fill="#7542e5"/><path d="M4 10c2 0 5 0 7 2" stroke="#ff9640" stroke-width="3"/></svg>
 <!-- chrome -->
 <svg class="abs" style="left:907px;top:12px" width="24" height="24" viewBox="0 0 24 24"><path d="M12 12L22.4 6A12 12 0 0 0 1.6 6z" fill="#ea4335"/><path d="M12 12L1.6 6A12 12 0 0 0 12 24z" fill="#34a853"/><path d="M12 12L12 24A12 12 0 0 0 22.4 6z" fill="#fbbc04"/><circle cx="12" cy="12" r="5.5" fill="#fff"/><circle cx="12" cy="12" r="4.3" fill="#4285f4"/></svg>
 <!-- active chrome -->
 <div class="abs" style="left:943px;top:4px;width:40px;height:40px;border-radius:5px;background:#2d2d2d;border:1px solid #353535"></div>
 <svg class="abs" style="left:951px;top:12px" width="24" height="24" viewBox="0 0 24 24"><path d="M12 12L22.4 6A12 12 0 0 0 1.6 6z" fill="#ea4335"/><path d="M12 12L1.6 6A12 12 0 0 0 12 24z" fill="#34a853"/><path d="M12 12L12 24A12 12 0 0 0 22.4 6z" fill="#fbbc04"/><circle cx="12" cy="12" r="5.5" fill="#fff"/><circle cx="12" cy="12" r="4.3" fill="#4285f4"/></svg>
 <svg class="abs" style="left:964px;top:6px" width="17" height="17" viewBox="0 0 17 17"><circle cx="8.5" cy="8.5" r="8.5" fill="#d6d6dc"/><path d="M3 4l3 4-1 5h7l-1-5 3-4-3 2H6z" fill="#3c3c44"/><circle cx="6.3" cy="8" r="1" fill="#fff"/><circle cx="10.7" cy="8" r="1" fill="#fff"/><path d="M4 3l2 2M13 3l-2 2" stroke="#5577aa" stroke-width="1.2"/></svg>
 <div class="abs" style="left:955px;top:40px;width:16px;height:3px;border-radius:2px;background:#4cc2ff"></div>
 <!-- spotify -->
 <svg class="abs" style="left:995px;top:12px" width="24" height="24" viewBox="0 0 24 24"><circle cx="12" cy="12" r="12" fill="#1ed760"/><path d="M5.5 8.5c4-1.3 9-1 13 1M6.3 12c3.5-1 7.5-.7 11 1M7 15.3c3-.7 6-.5 9 .9" fill="none" stroke="#000" stroke-width="1.9" stroke-linecap="round"/></svg>
 <div class="abs" style="left:1004px;top:41px;width:7px;height:3px;border-radius:2px;background:#9a9a9a"></div>
 <!-- tray -->
 <svg class="abs" style="left:1096px;top:20px" width="13" height="8" viewBox="0 0 13 8"><path d="M1 7l5.5-5.5L12 7" fill="none" stroke="#fff" stroke-width="1.5"/></svg>
 <div class="tb" style="left:1131px;top:11.5px;font-size:12px">ESP</div>
 <div class="tb" style="left:1130px;top:27.5px;font-size:12px">LAA</div>
 <svg class="abs" style="left:1170px;top:15px" width="18" height="18" viewBox="0 0 18 18"><path d="M1 3.5h10M1 3.5v9h10M4 16h6M7 12.5V16" fill="none" stroke="#fff" stroke-width="1.2"/><rect x="12.5" y="1" width="4" height="6" rx="1" fill="none" stroke="#fff" stroke-width="1.2"/><path d="M14.5 7v9" stroke="#fff" stroke-width="1.2"/></svg>
 <svg class="abs" style="left:1194px;top:17px" width="18" height="14" viewBox="0 0 18 14"><path d="M1 5h3l4-3.5v11L4 9H1z" fill="none" stroke="#fff" stroke-width="1.2" stroke-linejoin="round"/><path d="M11 4.5c1 1.5 1 3.5 0 5M13.5 2.5c2 2.5 2 6.5 0 9" fill="none" stroke="#aaa" stroke-width="1.1"/></svg>
 <div class="tb" style="left:1243px;top:11px;font-size:12.2px;text-align:right;width:40px">14:31</div>
 <div class="tb" style="left:1223px;top:26.5px;font-size:12.5px;text-align:right;width:60px">17/9/2024</div>
 <svg class="abs" style="left:1291px;top:16px" width="15" height="16" viewBox="0 0 15 16"><path d="M7.5 1a4.5 4.5 0 0 0-4.5 4.5v4L1 12.5h13L12 9.5v-4A4.5 4.5 0 0 0 7.5 1zM5.5 13.5a2 2 0 0 0 4 0" fill="none" stroke="#fff" stroke-width="1.3" stroke-linejoin="round"/></svg>
 <svg class="abs" style="left:1322px;top:13px" width="25" height="24" viewBox="0 0 25 24"><defs><linearGradient id="cp1" x1="0" y1="1" x2="1" y2="0"><stop offset="0" stop-color="#f6c544"/><stop offset=".4" stop-color="#3dc58a"/><stop offset="1" stop-color="#2b7ce8"/></linearGradient><linearGradient id="cp2" x1="0" y1="0" x2="1" y2="1"><stop offset="0" stop-color="#2f6fe8"/><stop offset=".5" stop-color="#c654d8"/><stop offset="1" stop-color="#f26aa0"/></linearGradient></defs><path d="M6 2h7c2 0 3 1 2.5 3L12 17c-.5 2-2 3-4 3H3c-2 0-3-1-2.5-3L4 5C4.5 3 5 2 6 2z" fill="url(#cp1)"/><path d="M13 5h6c2 0 3 1 3 3v6c0 2-1 3-3 3h-6z" fill="url(#cp2)"/><rect x="8" y="15" width="16" height="8" rx="2" fill="#f2c811"/><text x="16" y="21.5" font-family="Liberation Sans" font-weight="bold" font-size="7" text-anchor="middle" fill="#222">PRE</text></svg>
</div>

</body></html>
